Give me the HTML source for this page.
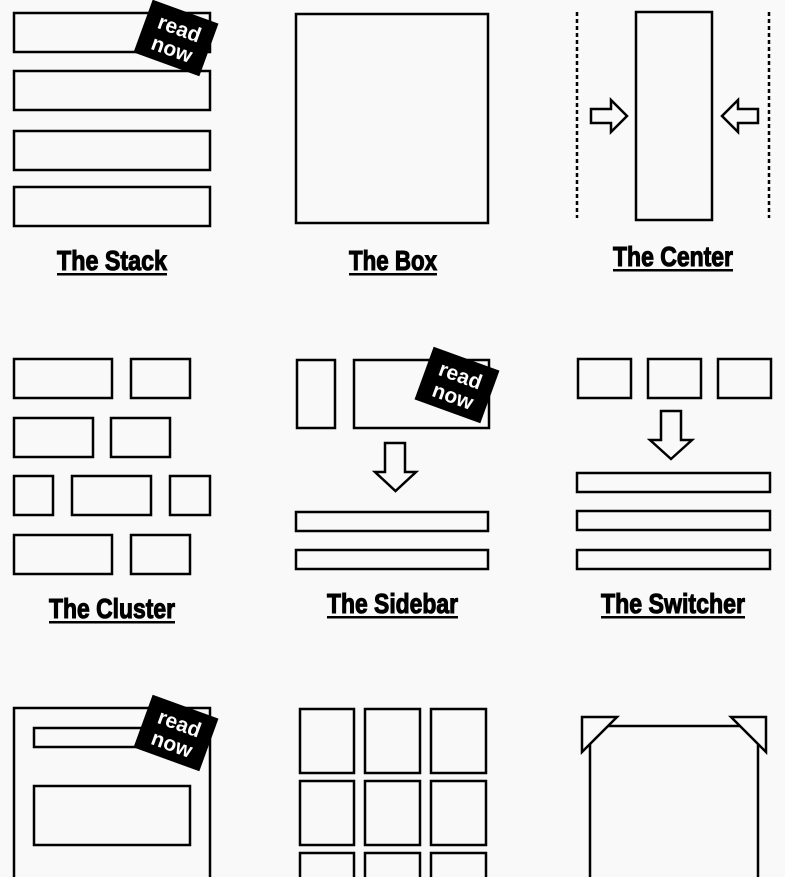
<!DOCTYPE html>
<html><head><meta charset="utf-8"><style>
html,body{margin:0;padding:0;background:#f9f9f9;width:785px;height:877px;overflow:hidden}
svg{display:block}
.r{fill:none;stroke:#000;stroke-width:2.5}
.l{font-family:"Liberation Sans",sans-serif;font-weight:bold;font-size:28px;fill:#000;stroke:#000;stroke-width:1.1}
.b{font-family:"Liberation Sans",sans-serif;font-weight:bold;font-size:21px;fill:#fff}
</style></head><body>
<svg width="785" height="877" viewBox="0 0 785 877" xmlns="http://www.w3.org/2000/svg">
<rect width="785" height="877" fill="#f9f9f9"/>
<!-- Stack -->
<rect class="r" x="14" y="13" width="196" height="39"/>
<rect class="r" x="14" y="71" width="196" height="39"/>
<rect class="r" x="14" y="131" width="196" height="39"/>
<rect class="r" x="14" y="187" width="196" height="39"/>
<text class="l" x="57" y="270" textLength="110" lengthAdjust="spacingAndGlyphs">The Stack</text>
<rect x="57" y="273" width="110" height="2.5"/>
<!-- Box -->
<rect class="r" x="296" y="14" width="192" height="209"/>
<text class="l" x="349" y="270" textLength="88" lengthAdjust="spacingAndGlyphs">The Box</text>
<rect x="349" y="273" width="88" height="2.5"/>
<!-- Center -->
<line x1="577" y1="12" x2="577" y2="218" stroke="#000" stroke-width="2.5" stroke-dasharray="4 3"/>
<line x1="769" y1="12" x2="769" y2="218" stroke="#000" stroke-width="2.5" stroke-dasharray="4 3"/>
<rect class="r" x="636" y="12" width="76" height="208"/>
<path class="r" d="M591 109 H611 V100 L627 116 L611 132 V123 H591 Z"/>
<path class="r" d="M758 109 H738 V100 L722 116 L738 132 V123 H758 Z"/>
<text class="l" x="613" y="266" textLength="120" lengthAdjust="spacingAndGlyphs">The Center</text>
<rect x="613" y="269" width="120" height="2.5"/>
<!-- Cluster -->
<rect class="r" x="14" y="359" width="98" height="39"/>
<rect class="r" x="131" y="359" width="59" height="39"/>
<rect class="r" x="14" y="418" width="79" height="39"/>
<rect class="r" x="111" y="418" width="59" height="39"/>
<rect class="r" x="14" y="476" width="39" height="39"/>
<rect class="r" x="72" y="476" width="79" height="39"/>
<rect class="r" x="170" y="476" width="40" height="39"/>
<rect class="r" x="14" y="535" width="98" height="39"/>
<rect class="r" x="131" y="535" width="59" height="39"/>
<text class="l" x="49" y="618" textLength="126" lengthAdjust="spacingAndGlyphs">The Cluster</text>
<rect x="49" y="621" width="126" height="2.5"/>
<!-- Sidebar -->
<rect class="r" x="297" y="360" width="38" height="68"/>
<rect class="r" x="354" y="360" width="135" height="68"/>
<path class="r" d="M385 443 H405 V472 H416 L395.5 491 L375 472 H385 Z"/>
<rect class="r" x="296" y="512" width="192" height="19"/>
<rect class="r" x="296" y="550" width="192" height="19"/>
<text class="l" x="327" y="613" textLength="131" lengthAdjust="spacingAndGlyphs">The Sidebar</text>
<rect x="327" y="616" width="131" height="2.5"/>
<!-- Switcher -->
<rect class="r" x="578" y="359" width="53" height="39"/>
<rect class="r" x="648" y="359" width="53" height="39"/>
<rect class="r" x="718" y="359" width="53" height="39"/>
<path class="r" d="M661 411 H681 V440 H692 L671 459 L650 440 H661 Z"/>
<rect class="r" x="577" y="473" width="193" height="19"/>
<rect class="r" x="577" y="511" width="193" height="19"/>
<rect class="r" x="577" y="550" width="193" height="19"/>
<text class="l" x="601" y="613" textLength="144" lengthAdjust="spacingAndGlyphs">The Switcher</text>
<rect x="601" y="616" width="144" height="2.5"/>
<!-- Row 3 -->
<rect class="r" x="14" y="708" width="196" height="180"/>
<rect class="r" x="34" y="728" width="170" height="19"/>
<rect class="r" x="34" y="786" width="156" height="59"/>
<rect class="r" x="300" y="709" width="54" height="64"/>
<rect class="r" x="365" y="709" width="55" height="64"/>
<rect class="r" x="431" y="709" width="55" height="64"/>
<rect class="r" x="300" y="781" width="54" height="64"/>
<rect class="r" x="365" y="781" width="55" height="64"/>
<rect class="r" x="431" y="781" width="55" height="64"/>
<rect class="r" x="300" y="853" width="54" height="34"/>
<rect class="r" x="365" y="853" width="55" height="34"/>
<rect class="r" x="431" y="853" width="55" height="34"/>
<rect class="r" x="590" y="726" width="168" height="160"/>
<path d="M582 717 H617 L582 752 Z" fill="#f9f9f9" stroke="#000" stroke-width="2.5"/>
<path d="M766 717 H731 L766 752 Z" fill="#f9f9f9" stroke="#000" stroke-width="2.5"/>
<!-- badges -->
<g transform="translate(176,38) rotate(20)">
<rect x="-35" y="-28" width="70" height="56" fill="#000"/>
<text class="b" x="0" y="-3" text-anchor="middle">read</text>
<text class="b" x="0" y="19" text-anchor="middle">now</text>
</g>
<g transform="translate(457,385) rotate(20)">
<rect x="-35" y="-28" width="70" height="56" fill="#000"/>
<text class="b" x="0" y="-3" text-anchor="middle">read</text>
<text class="b" x="0" y="19" text-anchor="middle">now</text>
</g>
<g transform="translate(176,733) rotate(20)">
<rect x="-35" y="-28" width="70" height="56" fill="#000"/>
<text class="b" x="0" y="-3" text-anchor="middle">read</text>
<text class="b" x="0" y="19" text-anchor="middle">now</text>
</g>
</svg>
</body></html>
